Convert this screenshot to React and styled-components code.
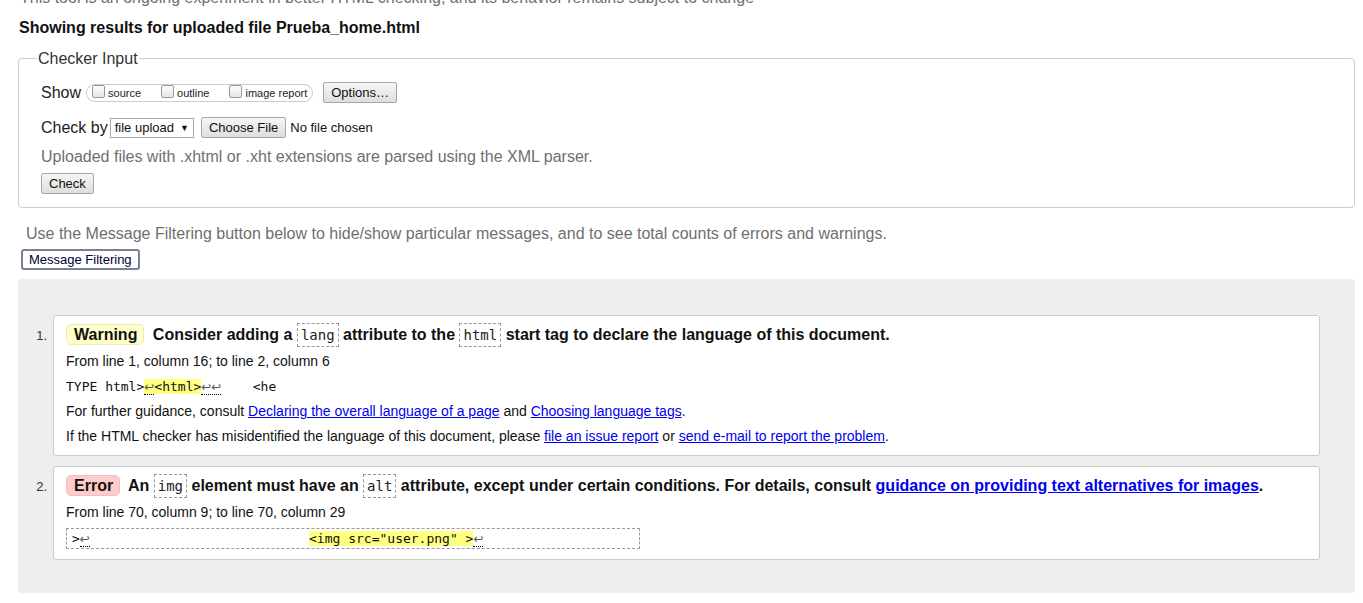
import styled, { createGlobalStyle } from 'styled-components';

const GlobalStyle = createGlobalStyle`
    html, body {
        margin: 0;
        padding: 0;
        background: #fff;
        overflow: hidden;
    }
    body {
        font-family: "Liberation Sans", Arial, sans-serif;
        color: #000;
    }
`

const Page = styled.div`
    padding: 0 8px 0 18px;
`

const Intro = styled.p`
    margin: -12px 0 0 2px;
    font-size: 16px;
    line-height: 19px;
    color: #6f6f6f;
    white-space: nowrap;
`

const Heading = styled.h2`
    margin: 11px 0 0 1px;
    font-size: 16px;
    line-height: 19px;
    font-weight: 700;
    color: #111;
`

const Fieldset = styled.fieldset`
    margin: 12px 0 0 0;
    padding: 14px 20px 13px 22px;
    border: 1px solid #ccc;
    border-radius: 4px;
    min-width: 0;
`

const Legend = styled.legend`
    margin-left: -4px;
    padding: 0 1px;
    font-size: 16px;
    line-height: 19px;
    color: #333;
`

const Row = styled.div`
    display: flex;
    align-items: center;
    gap: ${p => p.gap || 6}px;
    margin-top: ${p => p.top || 0}px;
    height: ${p => p.h || 21}px;
    font-size: 16px;
    color: #222;
`

const Pill = styled.div`
    display: flex;
    align-items: center;
    height: 16px;
    padding: 0 5px 0 5px;
    border: 1px solid #ccc;
    border-radius: 9px;
    gap: 20px;
`

const CheckLabel = styled.label`
    display: flex;
    align-items: center;
    gap: 3px;
    font-size: 11px;
    color: #222;
`

const Box = styled.input`
    appearance: none;
    margin: -3px 0 0 0;
    width: 13px;
    height: 13px;
    border: 1px solid #999;
    border-radius: 2px;
    background: linear-gradient(#fcfcfc, #e6e6e6);
`

const Button = styled.button`
    height: 21px;
    padding: 0 7px;
    font-family: "Liberation Sans", Arial, sans-serif;
    font-size: 13px;
    color: #111;
    border: 1px solid #a6a6a6;
    border-radius: 2px;
    background: linear-gradient(#f6f6f6, #dedede);
`

const FilterButton = styled(Button)`
    height: 21px;
    padding: 0 6px;
    border: 2px solid #7b8092;
    border-radius: 3px;
    background: #fff;
    color: #000033;
`

const Select = styled.span`
    display: inline-flex;
    align-items: center;
    gap: 6px;
    height: 18px;
    padding: 0 4px 0 4px;
    border: 1px solid #a6a6a6;
    font-size: 13px;
    color: #111;
    &::after {
        content: "▼";
        font-size: 9px;
    }
`

const FileName = styled.span`
    font-size: 13px;
    color: #111;
    margin-left: -3px;
`

const Hint = styled.p`
    margin: 9px 0 0 0;
    font-size: 16px;
    line-height: 19px;
    color: #6f6f6f;
`

const FilterNote = styled(Hint)`
    margin: 16px 0 0 8px;
`

const FilterBar = styled.div`
    margin: 6px 0 0 3px;
`

const Panel = styled.div`
    margin-top: 9px;
    height: 314px;
    box-sizing: border-box;
    padding: 36px 35px 0 0;
    background: #eee;
    border-radius: 4px;
    display: flex;
    flex-direction: column;
    gap: 10px;
`

const Item = styled.div`
    display: flex;
    align-items: flex-start;
`

const Num = styled.div`
    width: 35px;
    box-sizing: border-box;
    padding: 13px 6px 0 0;
    text-align: right;
    font-size: 13px;
    line-height: 16px;
    color: #333;
`

const Card = styled.div`
    flex: 1;
    background: #fff;
    border: 1px solid #ccc;
    border-radius: 3px;
    padding: 5px 12px 10px 12px;
`

const Message = styled.p`
    margin: 0;
    font-size: 16px;
    line-height: 28px;
    font-weight: 700;
    color: #111;
    white-space: nowrap;
`

const Badge = styled.span`
    display: inline-block;
    line-height: 19px;
    padding: 0 6px 0 7px;
    margin-right: 4px;
    border-radius: 5px;
    border: 1px solid ${p => p.kind === 'error' ? '#f0c0c0' : '#ececb4'};
    background: ${p => p.kind === 'error' ? '#ffcccc' : '#ffffcc'};
`

const Code = styled.code`
    font-family: "DejaVu Sans Mono", monospace;
    font-size: 14px;
    font-weight: 400;
    padding: 3px 3px;
    border: 1px dashed #999;
    color: #222;
`

const Line = styled.p`
    margin: ${p => p.top || 8}px 0 0 0;
    font-size: 14px;
    line-height: 17px;
    color: #111;
    white-space: nowrap;
`

const Extract = styled.p`
    margin: 8px 0 0 0;
    font-family: "DejaVu Sans Mono", monospace;
    font-size: 13px;
    line-height: 17px;
    color: #111;
    white-space: pre;
`

const BoxedExtract = styled(Extract)`
    margin-top: 7px;
    width: 574px;
    box-sizing: border-box;
    padding: 1px 5px;
    border: 1px dashed #999;
`

const Mark = styled.mark`
    background: #ffff80;
    color: #111;
`

const Lf = styled.span`
    color: #555;
    font-family: "DejaVu Sans", sans-serif;
    font-size: 12px;
    line-height: 1;
    border-bottom: 1px dotted #000;
`

const A = styled.a`
    color: #0000ee;
    text-decoration: underline;
`

export default function App() {
    return (
        <Page>
            <GlobalStyle />
            <Intro>This tool is an ongoing experiment in better HTML checking, and its behavior remains subject to change</Intro>
            <Heading>Showing results for uploaded file Prueba_home.html</Heading>

            <Fieldset>
                <Legend>Checker Input</Legend>
                <Row gap={5}>
                    <span>Show</span>
                    <Pill>
                        <CheckLabel><Box type='checkbox' />source</CheckLabel>
                        <CheckLabel><Box type='checkbox' />outline</CheckLabel>
                        <CheckLabel><Box type='checkbox' />image report</CheckLabel>
                    </Pill>
                    <Button style={{ marginLeft: 5 }}>Options…</Button>
                </Row>
                <Row top={14} gap={7}>
                    <span style={{ marginRight: -5 }}>Check by</span>
                    <Select>file upload</Select>
                    <Button>Choose File</Button>
                    <FileName>No file chosen</FileName>
                </Row>
                <Hint>Uploaded files with .xhtml or .xht extensions are parsed using the XML parser.</Hint>
                <Row top={7}>
                    <Button>Check</Button>
                </Row>
            </Fieldset>

            <FilterNote>Use the Message Filtering button below to hide/show particular messages, and to see total counts of errors and warnings.</FilterNote>
            <FilterBar>
                <FilterButton>Message Filtering</FilterButton>
            </FilterBar>

            <Panel>
                <Item>
                    <Num>1.</Num>
                    <Card>
                        <Message>
                            <Badge>Warning</Badge> Consider adding a <Code>lang</Code> attribute to the <Code>html</Code> start tag to declare the language of this document.
                        </Message>
                        <Line top={4}>From line 1, column 16; to line 2, column 6</Line>
                        <Extract>TYPE html&gt;<Mark><Lf>↩</Lf>&lt;html&gt;</Mark><Lf>↩↩</Lf>{'    '}&lt;he</Extract>
                        <Line>For further guidance, consult <A href='#'>Declaring the overall language of a page</A> and <A href='#'>Choosing language tags</A>.</Line>
                        <Line>If the HTML checker has misidentified the language of this document, please <A href='#'>file an issue report</A> or <A href='#'>send e-mail to report the problem</A>.</Line>
                    </Card>
                </Item>
                <Item>
                    <Num>2.</Num>
                    <Card>
                        <Message>
                            <Badge kind='error'>Error</Badge> An <Code>img</Code> element must have an <Code>alt</Code> attribute, except under certain conditions. For details, consult <A href='#'>guidance on providing text alternatives for images</A>.
                        </Message>
                        <Line top={4}>From line 70, column 9; to line 70, column 29</Line>
                        <BoxedExtract>&gt;<Lf>↩</Lf>{' '.repeat(28)}<Mark>&lt;img src="user.png" &gt;</Mark><Lf>↩</Lf></BoxedExtract>
                    </Card>
                </Item>
            </Panel>
        </Page>
    )
}
